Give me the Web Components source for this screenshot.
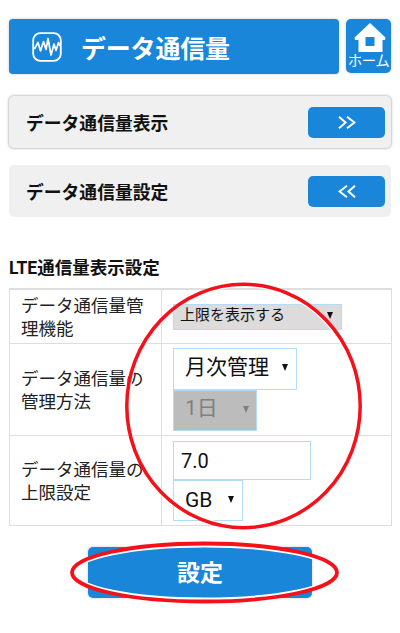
<!DOCTYPE html>
<html lang="ja">
<head>
<meta charset="UTF-8">
<title>データ通信量</title>
<style>
  html, body { margin: 0; background: #fff; }
  body { font-family: Roboto, "Noto Sans CJK JP", sans-serif; color: #111; }
</style>
</head>
<body>
<data-page>
  <page-header slot="header">データ通信量</page-header>
  <nav-row dir-icon="next" raised>データ通信量表示</nav-row>
  <nav-row dir-icon="prev">データ通信量設定</nav-row>
  <settings-form>
    <span slot="heading">LTE通信量表示設定</span>
    <setting-row style="--row-h:54px">
      <span slot="label">データ通信量管理機能</span>
      <fake-select variant="small" style="--w:169px;--h:26px;--nudge:4px">上限を表示する</fake-select>
    </setting-row>
    <setting-row style="--row-h:92px">
      <span slot="label">データ通信量の管理方法</span>
      <fake-select style="--w:124px;--h:42px;--nudge:4px">月次管理</fake-select>
      <fake-select variant="disabled" style="--w:84px;--h:41px;--nudge:4px">1日</fake-select>
    </setting-row>
    <setting-row style="--row-h:90px">
      <span slot="label">データ通信量の上限設定</span>
      <text-field style="--w:138px;--h:39px">7.0</text-field>
      <fake-select style="--w:70px;--h:41px">GB</fake-select>
    </setting-row>
  </settings-form>
  <submit-button>設定</submit-button>
</data-page>

<script>
function define(name, css, html, setup) {
  const tpl = document.createElement("template");
  tpl.innerHTML = `<style>${css}</style>${html}`;
  customElements.define(name, class extends HTMLElement {
    constructor() {
      super();
      this.attachShadow({ mode: "open" });
      this.shadowRoot.appendChild(tpl.content.cloneNode(true));
    }
    connectedCallback() {
      if (setup) setup(this, this.shadowRoot);
    }
  });
}

define("data-page", `
  :host { display: block; position: relative; width: 400px; height: 633px; overflow: hidden; box-sizing: border-box; padding: 19px 9px 0 9px; }
  .marks { position: absolute; inset: 0; pointer-events: none; }
`, `
  <slot name="header"></slot>
  <slot></slot>
  <svg class="marks" width="400" height="633" viewBox="0 0 400 633" fill="none">
    <ellipse cx="243.5" cy="406" rx="115" ry="120" stroke="#fff" stroke-width="2.5"/>
    <ellipse cx="243.5" cy="406" rx="116.7" ry="121.7" stroke="#f5101a" stroke-width="3.5"/>
    <ellipse cx="204.5" cy="572.5" rx="130" ry="26.5" stroke="#fff" stroke-width="3"/>
    <ellipse cx="204.5" cy="572.5" rx="132.5" ry="29" stroke="#f5101a" stroke-width="3.8"/>
  </svg>
`);

define("page-header", `
  :host { display: flex; gap: 7px; height: 55px; margin-bottom: 22px; }
  .title { flex: 1; display: flex; align-items: center; background: #1a86d9; border-radius: 4px; color: #fff; font-size: 25px; font-weight: 700; padding-left: 23px; gap: 19px; box-shadow: 0 0 3px rgba(120,90,70,.35); letter-spacing: -.2px; }
  .home { width: 45px; height: 54px; box-sizing: border-box; background: #1a86d9; border-radius: 5px; color: #fff; display: flex; flex-direction: column; align-items: center; font-size: 14.5px; line-height: 16px; padding-top: 4px; box-shadow: 0 0 3px rgba(120,90,70,.35); white-space: nowrap; }
  .home svg { display: block; margin: 0 0 2px 2px; }
  .label { letter-spacing: -.6px; }
`, `
  <div class="title">
    <svg width="30" height="30" viewBox="0 0 30 30" fill="none" stroke="#fff" aria-hidden="true">
      <rect x="1.2" y="1.2" width="27.6" height="27.6" rx="7" stroke-width="1.8"/>
      <path d="M2.5 17 6 10.5 8.5 19 11.5 9.5 14 17.5 16 6.5 19 23 22 12 24 18.5 26.5 10.5 28 14" stroke-width="1.7" stroke-linejoin="round"/>
    </svg>
    <slot></slot>
  </div>
  <div class="home">
    <svg width="32" height="29" viewBox="0 0 32 29" aria-hidden="true">
      <path fill="#fff" fill-rule="evenodd" d="M16 0 31.5 14.5 31 17H28.5V29H4.5V17H1L.5 14.5ZM11.5 14V23H20.5V14Z"/>
    </svg>
    <span class="label">ホーム</span>
  </div>
`);

define("nav-row", `
  :host { display: flex; align-items: center; justify-content: space-between; box-sizing: border-box; height: 52px; margin-bottom: 17px; padding: 0 6px 0 17px; background: #f0f0f0; border-radius: 5px; font-size: 17.8px; font-weight: 700; color: #111; }
  :host([raised]) { box-shadow: 0 0 2px 1px rgba(0,0,0,.22); }
  .btn { width: 77px; height: 31px; background: #1a86d9; border-radius: 5px; display: flex; align-items: center; justify-content: center; box-shadow: 0 0 1px #fff; }
`, `
  <slot></slot>
  <div class="btn">
    <svg width="18" height="13" viewBox="0 0 18 13" fill="none" stroke="#fff" stroke-width="2">
      <path class="glyph" d=""/>
    </svg>
  </div>
`, (el, root) => {
  const next = "M1 .8 7.5 6.5 1 12.2M9 .8 16.5 6.5 9 12.2";
  const prev = "M17 .8 10.5 6.5 17 12.2M9 .8 1.5 6.5 9 12.2";
  root.querySelector(".glyph").setAttribute("d", el.getAttribute("dir-icon") === "prev" ? prev : next);
});

define("settings-form", `
  :host { display: block; margin-top: 41px; }
  .heading { font-size: 17.5px; font-weight: 700; line-height: 20px; margin-bottom: 10px; color: #111; white-space: nowrap; }
  .table { display: block; border: 1px solid #dedede; width: 381px; }
`, `
  <div class="heading"><slot name="heading"></slot></div>
  <div class="table"><slot></slot></div>
`);

define("setting-row", `
  :host { display: grid; grid-template-columns: 152px 1fr; height: var(--row-h); box-sizing: border-box; border-top: 1px solid #dedede; }
  :host(:first-child) { border-top: 0; }
  .label { display: flex; align-items: center; padding: 3px 11px 0; font-size: 17.5px; line-height: 23px; color: #222; border-right: 1px solid #dedede; }
  .value { display: flex; flex-direction: column; justify-content: center; align-items: flex-start; padding-left: 11px; }
`, `
  <div class="label"><slot name="label"></slot></div>
  <div class="value"><slot></slot></div>
`);

define("fake-select", `
  :host { display: flex; align-items: center; justify-content: space-between; box-sizing: border-box; width: var(--w); height: var(--h); border: 1px solid #b5dcf7; background: #fff; font-size: 21px; color: #111; padding: 0 8px 0 11px; }
  :host([variant="small"]) { background: #dcdcdc; font-size: 15px; padding: 0 8px 0 6px; margin-top: 1px; }
  :host([variant="disabled"]) { background: #bcbcbc; color: #808080; padding-right: 7px; }
  .text { margin-bottom: var(--nudge, 0); line-height: 1; }
  .arrow { width: 0; height: 0; border: 3.5px solid transparent; border-top: 7px solid currentColor; border-bottom: 0; margin-bottom: 3px; }
`, `<span class="text"><slot></slot></span><span class="arrow"></span>`);

define("text-field", `
  :host { display: flex; align-items: center; box-sizing: border-box; width: var(--w); height: var(--h); border: 1px solid #b5dcf7; padding: 0 7px; font-size: 20px; color: #111; margin-top: 1px; }
`, `<slot></slot>`);

define("submit-button", `
  :host { display: block; width: 224px; height: 51px; margin: 21px 0 0 79px; }
  .btn { height: 100%; display: flex; align-items: center; justify-content: center; background: #1a86d9; border-radius: 5px; color: #fff; font-size: 23px; font-weight: 700; padding-bottom: 3px; box-sizing: border-box; box-shadow: 0 0 3px rgba(120,90,70,.35); }
`, `<div class="btn"><slot></slot></div>`);
</script>
</body>
</html>
